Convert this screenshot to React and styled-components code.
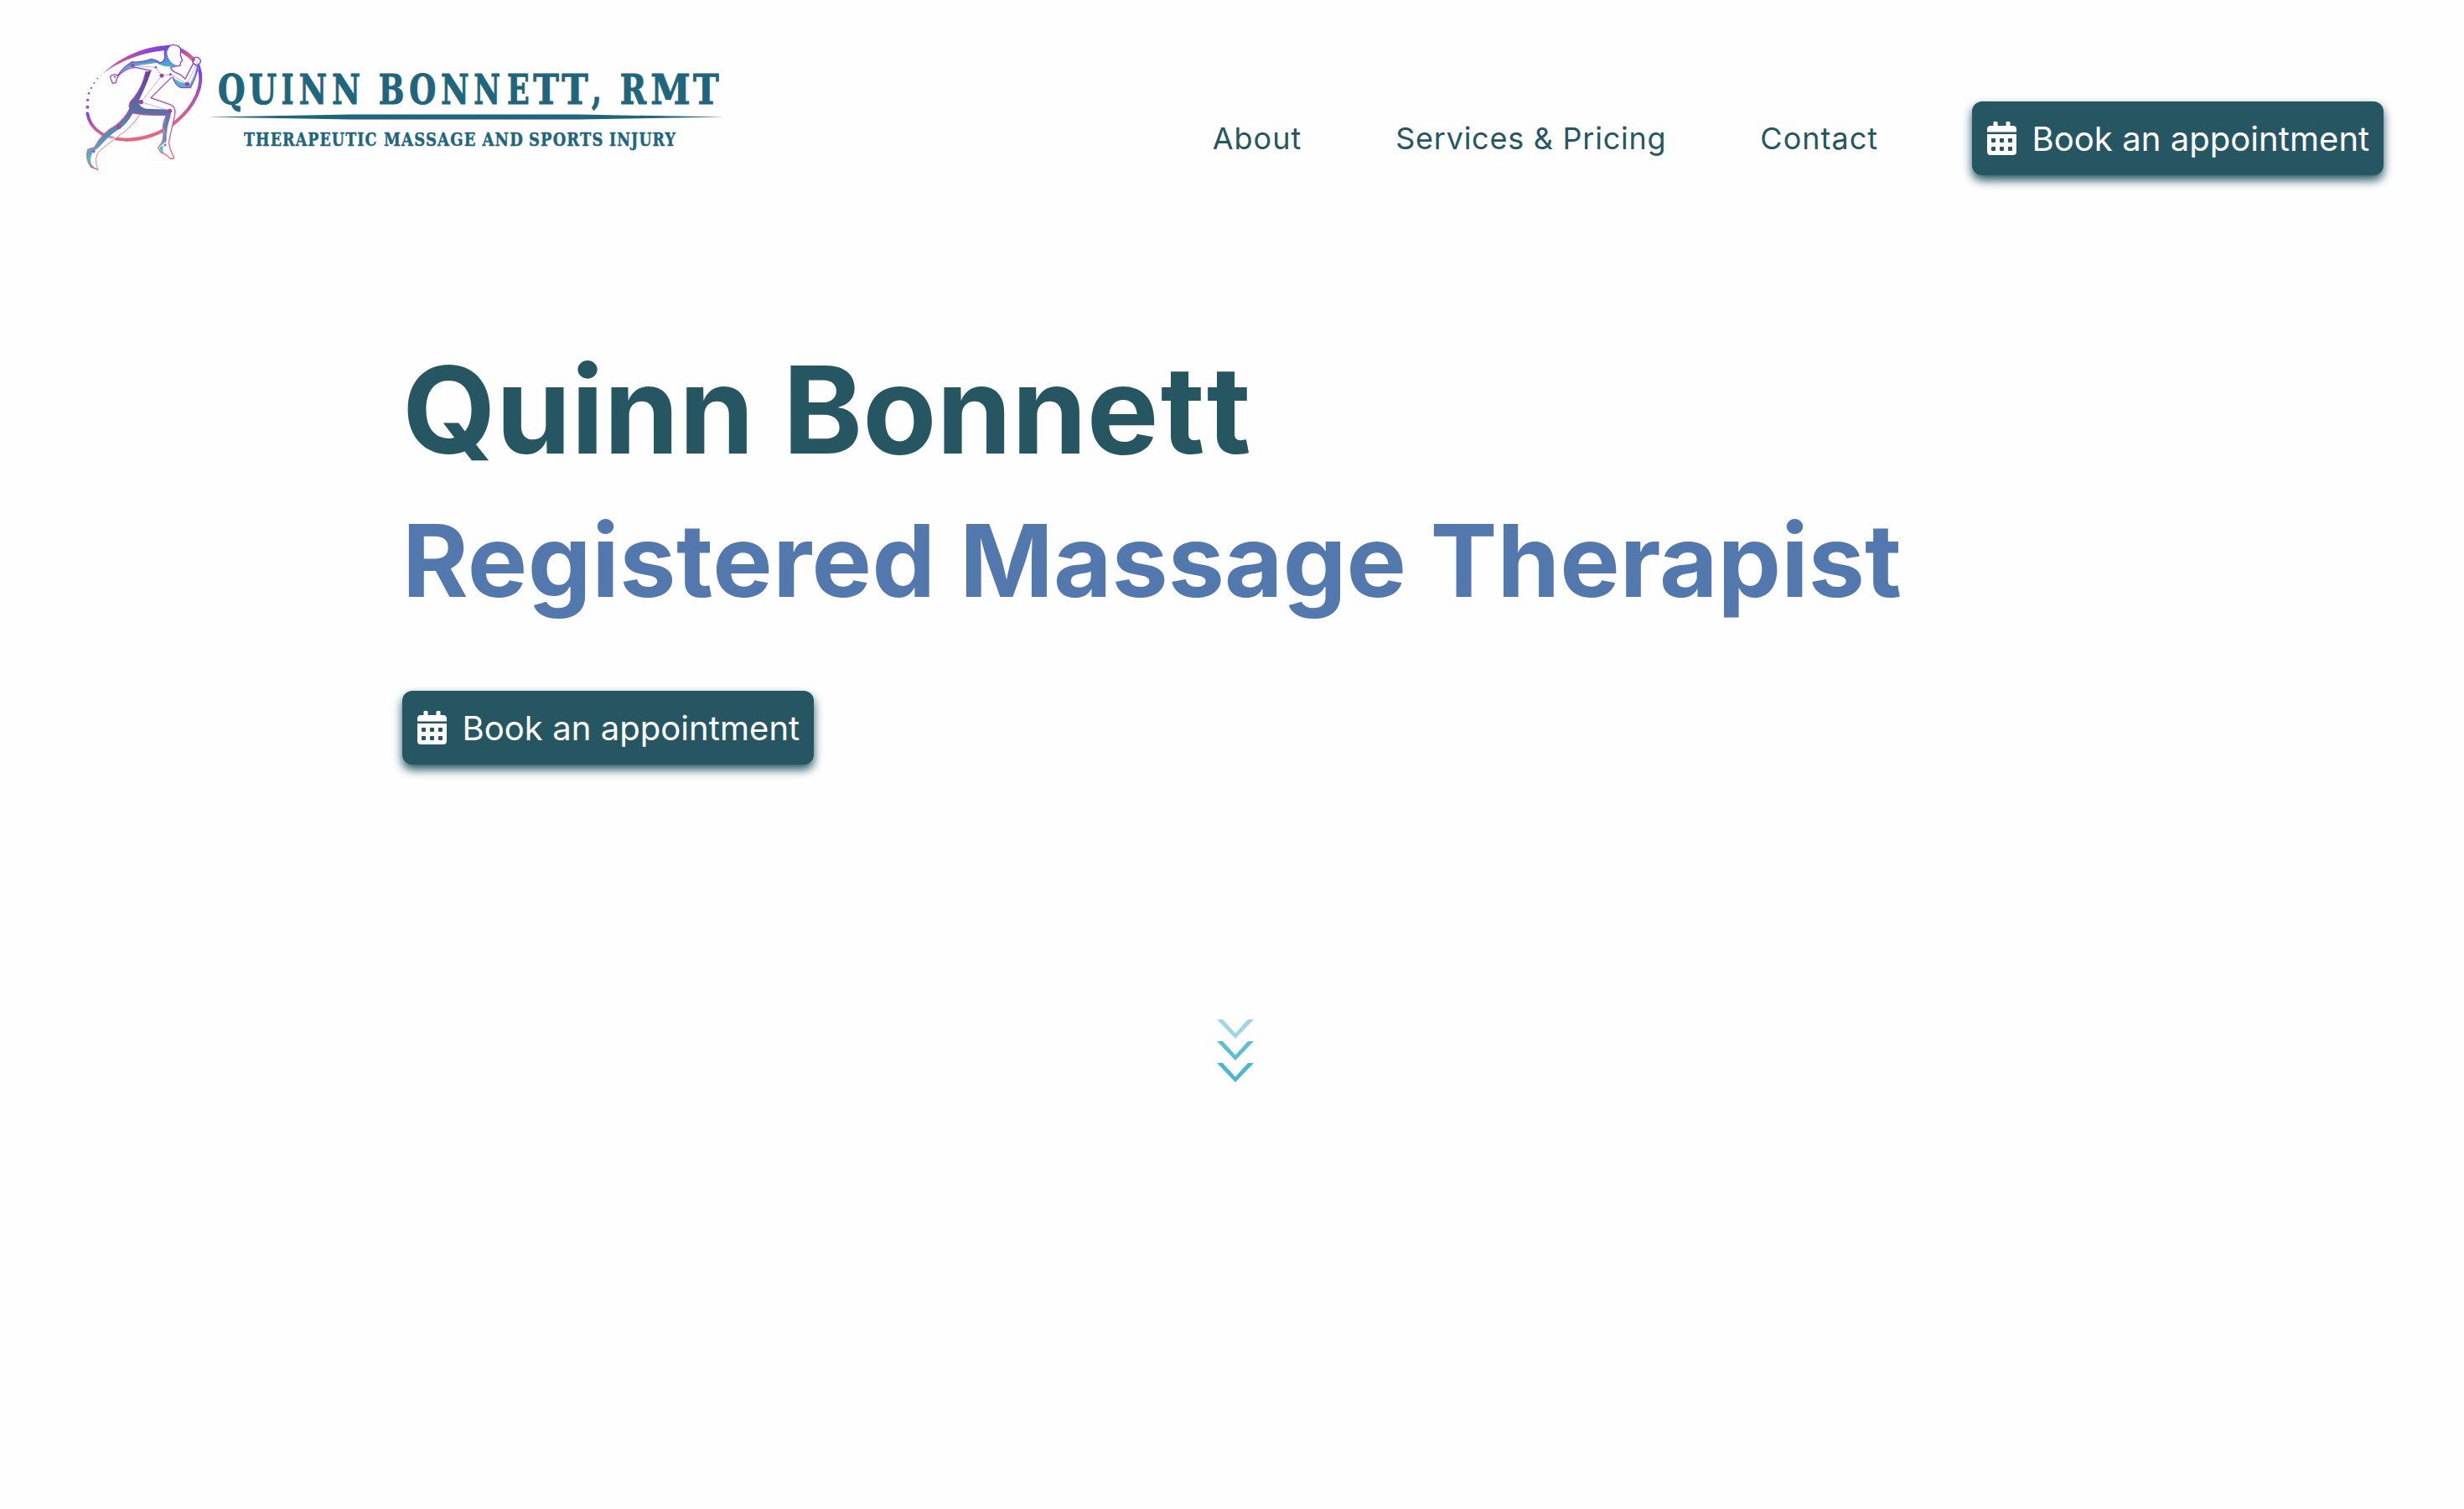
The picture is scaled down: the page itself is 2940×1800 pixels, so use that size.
import React from "react";
import styled, { createGlobalStyle } from "styled-components";
import { FaCalendarAlt } from "react-icons/fa";

const GlobalStyle = createGlobalStyle`
  * { box-sizing: border-box; }
  body {
    margin: 0;
    background: #fefefe;
    font-family: Inter, "Liberation Sans", sans-serif;
    color: #265662;
  }
`;

const Page = styled.div`
  display: flex;
  flex-direction: column;
  min-height: 1800px;
`;

const Header = styled.header`
  display: flex;
  justify-content: space-between;
  align-items: flex-start;
  height: 240px;
  padding: 40px 96px 0 90px;
`;

const Logo = styled.svg`
  width: 790px;
  height: 170px;
  flex: none;
`;

const LogoText = styled.text`
  font-family: "DejaVu Serif", serif;
  font-weight: 700;
  font-size: ${(p) => p.$size}px;
  letter-spacing: ${(p) => p.$tracking || 0}px;
  fill: #1f657c;
  stroke: #1f657c;
  stroke-width: ${(p) => p.$stroke}px;
`;

const Nav = styled.nav`
  display: flex;
  align-items: center;
  margin-top: 81px;
  height: 88px;
`;

const NavLink = styled.a`
  font-size: 36px;
  font-weight: 400;
  letter-spacing: ${(p) => p.$tracking}px;
  line-height: 44px;
  margin-right: 112px;
  white-space: nowrap;
`;

const BookButton = styled.button`
  display: flex;
  align-items: center;
  gap: 18.5px;
  width: 491px;
  height: 88px;
  padding: 0 0 0 18px;
  border: 0;
  border-radius: 12px;
  background: #265662;
  box-shadow: 0 6px 12px #265662;
  color: #fff;
  font: 400 40px/48px Inter, "Liberation Sans", sans-serif;
  white-space: nowrap;
`;

const CalendarIcon = styled(FaCalendarAlt)`
  flex: none;
  width: 35px;
  height: 40px;
`;

const ButtonLabel = styled.span`
  padding-top: 2px;
  letter-spacing: 0.06px;
`;

const Hero = styled.main`
  display: flex;
  flex-direction: column;
  align-items: flex-start;
  padding: 162px 480px 0;
`;

const Name = styled.h1`
  margin: 0;
  font-size: 144px;
  line-height: 174px;
  font-weight: 700;
  font-variant-ligatures: none;
  white-space: nowrap;
`;

const Role = styled.h2`
  margin: 20px 0 82px;
  font-size: 120px;
  line-height: 146px;
  font-weight: 700;
  color: #5378ad;
  white-space: nowrap;
`;

const Tracked = styled.span`
  letter-spacing: ${(p) => p.$by}px;
`;

const ScrollHint = styled.svg`
  align-self: center;
  width: 48px;
  height: 80px;
  margin: 302px 0 0 8px;
`;

const dots = [[43, 263, 6], [44, 238, 5], [48, 214, 4], [57, 195, 3.5], [67, 177, 3], [79, 161, 2.6], [90, 150, 1.8]];

const title = [
  ["Q", 261, 291.5], ["U", 298, 329], ["I", 336.7, 349.3], ["N", 357.7, 389], ["N", 397, 429],
  ["B", 452.7, 481.3], ["O", 489.3, 519.3], ["N", 527, 558.7], ["N", 566.3, 596], ["E", 606, 630.7],
  ["T", 637.3, 666], ["T", 671.3, 700.7], [",", 707, 716.7], ["R", 740.7, 770], ["M", 777.3, 822.7], ["T", 828, 856.7],
];

const tagline = [
  ["THERAPEUTIC", 201, 159.5], ["MASSAGE", 368, 110.5], ["AND", 485.5, 49.5], ["SPORTS", 541, 89.5], ["INJURY", 637, 80],
];

function Runner() {
  return (
    <g transform="scale(0.3333)" fill="none" strokeLinejoin="round" strokeLinecap="round">
      <defs>
        <linearGradient id="ga" gradientUnits="userSpaceOnUse" x1="100" y1="142" x2="290" y2="50">
          <stop offset="0" stopColor="#e0607f" /><stop offset="1" stopColor="#8542dc" />
        </linearGradient>
        <linearGradient id="gb" gradientUnits="userSpaceOnUse" x1="350" y1="50" x2="415" y2="90">
          <stop offset="0" stopColor="#8042e0" /><stop offset="1" stopColor="#e0607f" />
        </linearGradient>
        <linearGradient id="gc" gradientUnits="userSpaceOnUse" x1="0" y1="130" x2="0" y2="330">
          <stop offset="0" stopColor="#7d3fe8" /><stop offset="1" stopColor="#e6657f" />
        </linearGradient>
        <linearGradient id="gd" gradientUnits="userSpaceOnUse" x1="0" y1="285" x2="0" y2="365">
          <stop offset="0" stopColor="#7d3fe8" /><stop offset="1" stopColor="#e6657f" />
        </linearGradient>
        <linearGradient id="line" gradientUnits="userSpaceOnUse" x1="0" y1="60" x2="0" y2="450">
          <stop offset="0" stopColor="#7a35dd" /><stop offset="0.35" stopColor="#9a3fc0" />
          <stop offset="0.7" stopColor="#c9568f" /><stop offset="1" stopColor="#ee6670" />
        </linearGradient>
        <linearGradient id="leg" gradientUnits="userSpaceOnUse" x1="0" y1="130" x2="0" y2="470">
          <stop offset="0" stopColor="#6d3c93" /><stop offset="0.45" stopColor="#5872a4" />
          <stop offset="0.75" stopColor="#4e9bc0" /><stop offset="1" stopColor="#3fcbd6" />
        </linearGradient>
        <linearGradient id="head" gradientUnits="userSpaceOnUse" x1="0" y1="45" x2="0" y2="118">
          <stop offset="0" stopColor="#7450c4" /><stop offset="1" stopColor="#42b4cf" />
        </linearGradient>
      </defs>
      <path d="M100 142 C155 88 245 42 345 42 L350 59 C262 59 165 93 100 142 Z" fill="url(#ga)" />
      <path d="M345 50 C375 54 400 70 422 93" stroke="url(#gb)" strokeWidth="15" />
      <path d="M441 118 C463 180 432 260 352 322 C304 360 240 380 180 380" stroke="url(#gc)" strokeWidth="12" />
      <path d="M180 380 C100 378 52 340 43 286" stroke="url(#gd)" strokeWidth="11" />
      {dots.map(([x, y, r]) => <circle key={y} cx={x} cy={y} r={r} fill={y > 230 ? "#a54bb4" : "#a04cc8"} />)}

      <path d="M124 152 L130 149 Q144 143 151 151 Q172 121 202 101 L270 93 L300 102 Q318 103 320 86 Q316 45 345 41 Q374 40 377 58 L376 78 L383 97 L377 101 L375 115 L360 117 L341 121 Q346 134 378 148 L396 163 L424 107 Q445 100 440 128 L412 194 Q370 202 347 156 L262 230 L338 254 Q360 260 356 290 L336 385 Q338 410 353 445 Q345 457 300 415 L298 405 Q322 385 313 330 L325 292 L228 293 Q200 335 152 369 L80 430 Q66 455 80 487 L55 480 Q36 450 42 418 L70 403 Q94 356 150 326 L191 276 Q188 250 215 225 Q255 168 265 134 L205 120 Q175 136 155 153 L151 157 L145 178 L134 177 Z" fill="#fefefe" />
      <path d="M136 372 Q110 369 93 360" stroke="#a06a9c" strokeWidth="8" opacity="0.7" />

      <path d="M320 45 Q333 40 345 41 Q319 59 333 88 Q342 108 364 115 Q325 126 290 105 L205 117 Q174 129 154 148 Q174 120 203 101 Q235 104 270 93 Q292 94 302 105 Q317 103 320 85 Q315 64 320 45 Z" fill="url(#head)" />
      <path d="M348 157 Q372 178 410 180 Q430 145 434 114 Q440 115 438 130 L412 194 L380 194 Q359 185 348 157 Z" fill="#49b8d0" />
      <path d="M252 137 L271 133 Q259 175 229 236 Q222 263 255 269 L338 272 Q346 286 336 310 Q322 349 326 383 L302 406 Q322 382 315 330 L325 294 L238 292 Q212 282 204 288 Q184 325 152 345 Q118 365 83 408 Q48 427 56 465 L73 485 L55 480 Q36 450 42 418 L69 407 Q94 356 147 327 Q178 303 195 269 Q186 250 210 230 Q242 188 252 137 Z" fill="url(#leg)" />
      <path d="M302 405 Q299 420 317 429 Q309 412 317 402 Z" fill="#3fcbd6" />

      <g stroke="url(#line)" strokeWidth="3.8">
        <path d="M271 133 L215 121 Q180 123 154 151 Q151 160 148 161 L145 176 L133 178 L129 168 Q120 150 132 149 Q146 144 151 151 Q168 123 201 102 Q240 104 270 92 Q292 94 302 105 Q317 103 320 85 Q315 51 332 44" />
        <path d="M345 41 Q374 40 377 58 L376 78 L383 97 L377 101 L375 115 L360 117 L341 121 Q344 135 365 142 Q378 146 393 163 L422 107" />
        <path d="M348 156 Q359 190 380 194 L412 194 Q436 150 439 114" />
        <path d="M424 108 Q414 96 423 89 Q433 80 443 89 Q453 98 444 108 Q434 120 424 108 Z" />
        <path d="M252 137 Q242 188 210 230 Q186 250 195 269 Q178 303 147 327 Q94 356 69 407 L44 415 Q34 452 57 478 L80 487" />
        <path d="M343 158 L270 230 L338 254 Q361 261 356 290 L335 385 Q334 410 353 443 Q354 452 337 446 Q324 431 305 425 L296 408 Q321 386 313 345 Q311 325 325 293 L250 290 Q211 288 204 283" />
        <path d="M228 293 Q206 332 152 369 L89 417 Q63 440 80 487" strokeWidth="2.5" />
      </g>
      <path d="M310 151 L340 146 L400 181 M309 151 L235 245 L338 277 L321 399 M205 115 L288 121 L309 151 M66 422 L156 334 M400 181 L438 100 M141 155 L205 115" stroke="#b562bb" strokeWidth="1.6" />
      <g fill="#a444a8">
        <circle cx="205" cy="115" r="7" /><circle cx="309" cy="151" r="7.5" /><circle cx="235" cy="245" r="8" />
        <circle cx="338" cy="277" r="8" /><circle cx="400" cy="181" r="8" /><circle cx="156" cy="334" r="8" />
        <circle cx="288" cy="121" r="4" /><circle cx="340" cy="146" r="4.5" /><circle cx="321" cy="399" r="4" />
        <circle cx="66" cy="422" r="4.5" /><circle cx="141" cy="155" r="3.5" />
      </g>
    </g>
  );
}

function Brand() {
  return (
    <Logo viewBox="0 0 790 170">
      <Runner />
      {title.map(([letter, left, right]) => (
        <LogoText
          key={left}
          $size={49}
          $stroke={1.1}
          x={left - 91}
          y="83.5"
          textLength={right - left + 2}
          lengthAdjust="spacingAndGlyphs"
        >
          {letter}
        </LogoText>
      ))}
      <path d="M158 99.6 L330 96.6 H600 L774 99.6 L600 102.4 H330 Z" fill="#1f657c" />
      {tagline.map(([word, x, width]) => (
        <LogoText
          key={word}
          $size={21.5}
          $stroke={0.5}
          $tracking={1.4}
          x={x}
          y="134"
          textLength={width}
          lengthAdjust="spacingAndGlyphs"
        >
          {word}
        </LogoText>
      ))}
    </Logo>
  );
}

function Book() {
  return (
    <BookButton>
      <CalendarIcon />
      <ButtonLabel>Book an appointment</ButtonLabel>
    </BookButton>
  );
}

export default function App() {
  return (
    <Page>
      <GlobalStyle />
      <Header>
        <Brand />
        <Nav>
          <NavLink $tracking={1}>About</NavLink>
          <NavLink $tracking={0.75}>Services &amp; Pricing</NavLink>
          <NavLink $tracking={1}>Contact</NavLink>
          <Book />
        </Nav>
      </Header>
      <Hero>
        <Name>Quinn Bonn<Tracked $by={2.2}>et</Tracked>t</Name>
        <Role><Tracked $by={0.5}>Registered</Tracked> Massage Therapist</Role>
        <Book />
        <ScrollHint viewBox="0 0 48 80">
          <path d="M2 2 h7 L24 18.5 L39 2 h7 L24 25 Z" fill="#9dd6e4" />
          <path d="M2 28 h7 L24 44.5 L39 28 h7 L24 51 Z" fill="#5fbed6" />
          <path d="M2 54 h7 L24 70.5 L39 54 h7 L24 77 Z" fill="#4bb6cf" />
        </ScrollHint>
      </Hero>
    </Page>
  );
}
